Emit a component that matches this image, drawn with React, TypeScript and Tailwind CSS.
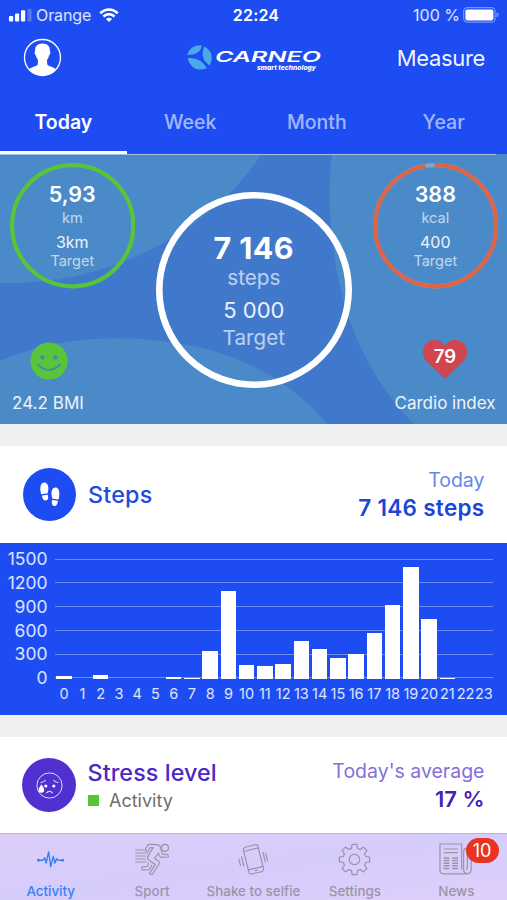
import * as React from 'react';
import clsx from 'clsx';

const PERIODS = ['Today', 'Week', 'Month', 'Year'];

const HOURLY_STEPS = [
    30, 0, 38, 0, 0, 0, 22, 12, 343, 1093, 165, 155, 185, 469, 365, 260, 310, 574, 913, 1396, 750, 12, 0, 0,
];
const Y_TICKS = [1500, 1200, 900, 600, 300, 0];
const MAX_STEPS = 1500;

const StatusBar = () => (
    <div className="flex h-[30px] items-center px-[9px] text-[16px] leading-[30px] text-white/85">
        <div className="flex flex-1 items-center">
            <svg width="23" height="13" viewBox="0 0 23 13" className="shrink-0 fill-white">
                <rect x="0" y="7" width="4.2" height="5.5" rx="1" />
                <rect x="6" y="4.6" width="4.2" height="7.9" rx="1" />
                <rect x="12" y="1.2" width="4.2" height="11.3" rx="1" />
                <rect x="18.6" y="0" width="4" height="12.5" rx="1" opacity="0.25" />
            </svg>
            <span className="ml-[4px] tracking-[-0.1px]">Orange</span>
            <svg width="20" height="15" viewBox="0 0 20 15" className="ml-[8px] fill-none stroke-white">
                <path d="M1.2 5.2 Q10 -2.2 18.8 5.2" strokeWidth="2.6" />
                <path d="M4.4 8.6 Q10 3.8 15.6 8.6" strokeWidth="2.6" />
                <path d="M10 14 L6.9 11 Q10 8.6 13.1 11 Z" className="fill-white stroke-none" />
            </svg>
        </div>
        <span className="pl-[5px] font-semibold tracking-[0.2px] text-white">22:24</span>
        <div className="flex flex-1 items-center justify-end">
            <span className="mr-[3px]">100 %</span>
            <svg width="36" height="16" viewBox="0 0 36 16" className="-mr-[1px]">
                <rect x="0.7" y="0.7" width="31.4" height="14.4" rx="3.6" className="fill-none stroke-white/40" strokeWidth="1.2" />
                <rect x="2.4" y="2.4" width="28" height="11" rx="1.8" className="fill-white" />
                <path d="M33.4 5.3 Q35.6 6 35.6 7.9 Q35.6 9.8 33.4 10.5 Z" className="fill-white/40" />
            </svg>
        </div>
    </div>
);

const Logo = () => (
    <svg width="140" height="32" viewBox="0 0 140 32">
        <g className="fill-[#4aa9e8]">
            <path d="M3.2 13 Q6 2.5 17.8 3.2 Q17.2 12.5 3.2 13 Z" />
            <path d="M20.4 4.6 Q31.5 11 25.8 23.6 Q15 16.6 20.4 4.6 Z" />
            <path d="M3.4 16.2 Q16.8 15 22.8 26.2 Q8.6 31.6 3.4 16.2 Z" />
        </g>
        <text
            x="31"
            y="20.2"
            textLength="106"
            lengthAdjust="spacingAndGlyphs"
            className="fill-white font-['Inter'] text-[14.5px] font-semibold italic"
        >
            CARNEO
        </text>
        <text
            x="73"
            y="27.6"
            textLength="59"
            lengthAdjust="spacingAndGlyphs"
            className="fill-white font-['Inter'] text-[6.5px] font-extrabold italic"
        >
            smart technology
        </text>
    </svg>
);

const NavBar = () => (
    <div className="flex h-[55px] items-center justify-between pr-[22px] pl-[23px]">
        <div className="flex w-[100px]">
            <svg width="39" height="39" viewBox="0 0 39 39">
                <circle cx="19.5" cy="19.5" r="18" className="fill-none stroke-white" strokeWidth="1.3" />
                <path
                    d="M19.5 5.4 C14 5.4 11.8 8.6 12.2 13 C11.2 13.4 11.8 17 13 17.6 C13.4 19.8 14.2 21 15 22 L14.8 26.2 C14 28.6 7.6 28.6 6 31.6 Q11.4 37.4 19.5 37.4 Q27.6 37.4 33 31.6 C31.4 28.6 25 28.6 24.2 26.2 L24 22 C24.8 21 25.6 19.8 26 17.6 C27.2 17 27.8 13.4 26.8 13 C27.2 8.6 25 5.4 19.5 5.4 Z"
                    className="fill-white"
                />
            </svg>
        </div>
        <Logo />
        <span className="w-[100px] text-right text-[22px] leading-none tracking-[-0.35px] text-white/95">Measure</span>
    </div>
);

const PeriodTabs = () => (
    <div className="flex h-[69px] pt-[2px]">
        {PERIODS.map((label, i) => (
            <div
                key={label}
                className={clsx(
                    'flex flex-1 justify-center border-b-[3px] pt-[21px] text-[19.5px] leading-[28px]',
                    i === 0 ? 'border-white font-semibold text-white' : 'border-transparent font-medium text-white/60'
                )}
            >
                {label}
            </div>
        ))}
    </div>
);

type RingProps = {
    size: number;
    stroke: number;
    className: string;
    gap?: boolean;
    children: React.ReactNode;
};

const Ring = ({ size, stroke, className, gap, children }: RingProps) => {
    const r = (size - stroke) / 2;
    return (
        <div className="relative shrink-0 text-center" style={{ width: size, height: size }}>
            <svg className="absolute inset-0 fill-none" width={size} height={size} viewBox={`0 0 ${size} ${size}`}>
                {gap && <circle cx={size / 2} cy={size / 2} r={r} strokeWidth={stroke} className="stroke-[#7fa6cf]" />}
                <circle
                    cx={size / 2}
                    cy={size / 2}
                    r={r}
                    strokeWidth={stroke}
                    pathLength={100}
                    strokeDasharray={gap ? '97.6 2.4' : undefined}
                    transform={`rotate(-91 ${size / 2} ${size / 2})`}
                    className={className}
                />
            </svg>
            <div className="relative flex h-full flex-col">{children}</div>
        </div>
    );
};

type SmallRingProps = { value: string; unit: string; target: string; className: string; gap?: boolean };

const SmallRing = ({ value, unit, target, className, gap }: SmallRingProps) => (
    <Ring size={125.4} stroke={4.2} className={className} gap={gap}>
        <span className="mt-[19px] text-[21.5px] leading-[25px] font-semibold text-white">{value}</span>
        <span className="text-[14.5px] leading-[21px] text-white/65">{unit}</span>
        <span className="mt-[4px] text-[16px] leading-[20px] text-white/90">{target}</span>
        <span className="text-[14.5px] leading-[18px] text-white/65">Target</span>
    </Ring>
);

const Overview = () => (
    <section className="relative h-[270px] overflow-hidden bg-[#4a8ac8]">
        <svg className="absolute inset-0" width="507" height="270" viewBox="0 0 507 270">
            <path
                d="M0 129 C60 130 110 118 165 88 C210 62 245 28 261 0 L332 0 C326 50 331 110 350 168 C366 210 388 245 414 270 L327 270 C300 236 255 208 210 196 C140 178 60 180 0 207 Z"
                className="fill-[#4078cc]"
            />
            <rect width="496" height="1" className="fill-[#a5c3e6]" />
        </svg>
        <div className="relative flex h-full justify-between pr-[9px] pl-[9.6px]">
            <div className="flex w-[125.4px] flex-col pt-[9.3px]">
                <SmallRing value="5,93" unit="km" target="3km" className="stroke-[#58c43a]" />
                <svg width="38" height="38" viewBox="0 0 38 38" className="mt-[53px] ml-[20.4px]">
                    <circle cx="19" cy="19" r="18.6" className="fill-[#58c43a]" />
                    <circle cx="12.4" cy="15.4" r="2.1" className="fill-[#4385b8]" />
                    <circle cx="25.2" cy="15.4" r="2.1" className="fill-[#4385b8]" />
                    <path d="M7.8 22.6 Q18.8 33.4 30 22.6" className="fill-none stroke-[#4385b8]" strokeWidth="1.6" strokeLinecap="round" />
                </svg>
                <span className="mt-[13px] ml-[2.4px] text-[17px] leading-[20px] tracking-[0.05px] whitespace-nowrap text-white/90">
                    24.2 BMI
                </span>
            </div>
            <div className="-mx-[10px] pt-[37.5px]">
                <Ring size={196} stroke={6.6} className="stroke-white">
                    <span className="mt-[38px] text-[30.5px] leading-[35px] font-bold tracking-[0.4px] text-white">7 146</span>
                    <span className="text-[20.7px] leading-[26px] text-white/65">steps</span>
                    <span className="mt-[6px] text-[22px] leading-[27px] text-white/90">5 000</span>
                    <span className="text-[20.7px] leading-[27px] text-white/65">Target</span>
                </Ring>
            </div>
            <div className="flex w-[125.4px] flex-col items-end pt-[9.3px]">
                <SmallRing value="388" unit="kcal" target="400" className="stroke-[#dd6546]" gap />
                <div className="relative mt-[50px] mr-[30px] h-[41px] w-[46px]">
                    <svg className="absolute inset-0" width="46" height="41" viewBox="0 0 46 41">
                        <path
                            d="M23 39.8 L4.6 22.2 C-0.8 16.4 0 7.4 5.6 3.2 C11.4 -0.8 19.4 0.8 23 7 C26.6 0.8 34.6 -0.8 40.4 3.2 C46 7.4 46.8 16.4 41.4 22.2 Z"
                            className="fill-[#cf4651]"
                        />
                    </svg>
                    <span className="relative block text-center text-[18.5px] leading-[35px] font-semibold text-white">79</span>
                </div>
                <span className="mt-[13px] mr-[2.5px] text-[17px] leading-[20px] whitespace-nowrap text-white/90">
                    Cardio index
                </span>
            </div>
        </div>
    </section>
);

const StepsCard = () => (
    <section>
        <div className="flex h-[97px] items-center bg-white pr-[22.5px] pl-[23px]">
            <div className="flex size-[53px] items-center justify-center rounded-full bg-[#1d4df2]">
                <svg width="20" height="25" viewBox="0 0 20 25" className="fill-white">
                    <path d="M1.1 12.2 C-0.6 5.4 0.4 0.6 4.2 0.4 C8.2 0.4 9.4 6 7.4 11.6 Z" />
                    <path d="M2 13.6 L7.7 12.8 C8.6 15.6 8.3 18.4 5.7 18.6 C3.3 18.6 2.2 16.6 2 13.6 Z" />
                    <path d="M12.4 16.8 C10.6 11.4 11.4 5.8 15.4 5.6 C19.2 5.6 20.2 10.8 18.6 17.4 Z" />
                    <path d="M12.2 18 L17.9 18.7 C17.7 21.8 16.5 24.2 14.3 24 C11.8 23.8 11.4 20.8 12.2 18 Z" />
                </svg>
            </div>
            <h2 className="ml-[12px] flex-1 text-[23.3px] leading-[28px] font-medium tracking-[0.2px] text-[#1f4bdc]">Steps</h2>
            <div className="flex flex-col items-end pb-[2px]">
                <span className="text-[19.5px] leading-[28px] text-[#6488ea]">Today</span>
                <span className="text-[22.5px] leading-[28px] font-semibold tracking-[0.3px] text-[#1c45da]">7 146 steps</span>
            </div>
        </div>
        <div className="flex h-[172px] bg-[#1d4df2] pr-[14px] text-white/85">
            <div className="flex w-[55px] flex-col pt-[4px] pr-[7.5px] text-right text-[17.5px] leading-[23.85px]">
                {Y_TICKS.map((tick) => (
                    <span key={tick}>{tick}</span>
                ))}
            </div>
            <div className="flex-1 pt-[15.5px]">
                <div className="relative h-[120px]">
                    <div className="absolute inset-0 flex flex-col justify-between">
                        {Y_TICKS.map((tick) => (
                            <div key={tick} className="h-[1px] bg-[#6a8cf8]" />
                        ))}
                    </div>
                    <div className="relative flex h-full items-end">
                        {HOURLY_STEPS.map((steps, hour) => (
                            <div key={hour} className="flex h-full flex-1 items-end justify-center">
                                <div className="w-[15.6px] bg-white" style={{ height: `${(steps / MAX_STEPS) * 100}%` }} />
                            </div>
                        ))}
                    </div>
                </div>
                <div className="mt-[5px] flex text-[14.5px] leading-[20px]">
                    {HOURLY_STEPS.map((_, hour) => (
                        <span key={hour} className="flex w-0 flex-1 justify-center">
                            {hour}
                        </span>
                    ))}
                </div>
            </div>
        </div>
    </section>
);

const StressCard = () => (
    <section className="flex h-[96px] items-center bg-white pr-[22.5px] pl-[22px]">
        <div className="flex size-[54px] items-center justify-center rounded-full bg-[#5130d0]">
            <svg width="27" height="27" viewBox="0 0 27 27" className="fill-none stroke-white/80" strokeWidth="1">
                <circle cx="13.5" cy="13.5" r="12.6" />
                <path d="M4.6 10.6 Q8 10.4 9.6 8 M17.4 8 Q19 10.4 22.4 10.6" strokeWidth="1.2" />
                <path d="M10.4 21 Q13.5 17.8 16.6 21" strokeWidth="1.4" />
                <circle cx="9.8" cy="14" r="1.6" className="fill-white stroke-none" />
                <circle cx="17.8" cy="14" r="1.6" className="fill-white stroke-none" />
                <path d="M5.4 12.2 Q8.2 16 8.2 18 A2.8 2.8 0 0 1 2.6 18 Q2.6 16 5.4 12.2 Z" className="fill-white stroke-none" />
            </svg>
        </div>
        <div className="ml-[11.5px] flex flex-1 flex-col pt-[3px]">
            <h2 className="text-[23.3px] leading-[28px] font-medium tracking-[0.1px] whitespace-nowrap text-[#4c29c4]">
                Stress level
            </h2>
            <div className="flex items-center">
                <span className="size-[11px] bg-[#58c43a]" />
                <span className="ml-[10.5px] text-[18px] leading-[28px] text-[#6d6d6d]">Activity</span>
            </div>
        </div>
        <div className="flex flex-col items-end">
            <span className="text-[19.5px] leading-[28px] text-[#8470d8]">Today's average</span>
            <span className="text-[22px] leading-[28px] font-semibold text-[#4423bd]">17 %</span>
        </div>
    </section>
);

const ActivityIcon = () => (
    <svg width="27" height="17" viewBox="0 0 27 17" className="fill-none stroke-current" strokeWidth="1.4" strokeLinejoin="round">
        <path d="M1.5 9.2 H6 L7.6 6.8 L9.2 12 L11.6 1 L13.8 15.6 L16.2 5.4 L18 12 L19.6 7.6 L21 9.2 H25.5" />
        <circle cx="1.4" cy="9.2" r="0.8" className="fill-current" />
        <circle cx="25.6" cy="9.2" r="0.8" className="fill-current" />
    </svg>
);

const SportIcon = () => (
    <svg
        width="35"
        height="33"
        viewBox="0 0 35 33"
        className="fill-none stroke-current"
        strokeWidth="1.2"
        strokeLinejoin="round"
        strokeLinecap="round"
    >
        <circle cx="30" cy="4.8" r="3.5" />
        <path d="M10.2 6.6 L12.6 2.2 Q13.2 1.2 14.6 1.3 L22.4 1.7 Q25 2.2 25.6 4.6 L27.4 11.2 L32.2 11.7 Q34 12.4 33.2 14 L26.6 14.4 Q24.8 14 24.2 12.2 L23.6 10 L19.6 15.2 L23.6 18.2 Q24.8 19.4 24 21 L17.8 30.8 Q16 32.4 14.4 30.4 L20.2 21.6 L13.8 17 Q11.8 15 13.2 12.6 L18.2 4.6 L15.2 4.6 L13 8.4 Q11.2 9 10.2 6.6 Z" />
        <path d="M13.6 20.2 L12.4 23.4 L7.4 23.8 Q5.8 25.4 7.4 26.8 L14 26.6 L16.8 22.4" />
        <path d="M0.8 7 H9 M0.8 10 H12.4 M0.8 13 H10.4 M0.8 16 H10.4 M0.8 19 H11.4" />
    </svg>
);

const ShakeIcon = () => (
    <svg width="31" height="31" viewBox="0 0 31 31" className="fill-none stroke-current" strokeWidth="1.2" strokeLinecap="round">
        <g transform="rotate(-14 15.5 15.5)">
            <rect x="8" y="1.6" width="15" height="27.6" rx="2.4" />
            <path d="M8 5.4 H23 M8 24.4 H23 M14.4 26.8 H16.6" />
        </g>
        <path d="M3.6 12.8 L5.8 22 M1 15.4 L2.5 21.6 M25 8.4 L27.4 18 M27.7 9.4 L29.6 16.6" />
    </svg>
);

const SettingsIcon = () => (
    <svg width="33" height="33" viewBox="0 0 33 33" className="fill-none stroke-current" strokeWidth="1.2" strokeLinejoin="round">
        <circle cx="16.5" cy="16.5" r="5.2" />
        <path d="M14.1 1.4 H18.9 L19.5 5.4 Q20.9 5.8 22.2 6.5 L25.5 4.1 L28.9 7.5 L26.5 10.8 Q27.2 12.1 27.6 13.5 L31.6 14.1 V18.9 L27.6 19.5 Q27.2 20.9 26.5 22.2 L28.9 25.5 L25.5 28.9 L22.2 26.5 Q20.9 27.2 19.5 27.6 L18.9 31.6 H14.1 L13.5 27.6 Q12.1 27.2 10.8 26.5 L7.5 28.9 L4.1 25.5 L6.5 22.2 Q5.8 20.9 5.4 19.5 L1.4 18.9 V14.1 L5.4 13.5 Q5.8 12.1 6.5 10.8 L4.1 7.5 L7.5 4.1 L10.8 6.5 Q12.1 5.8 13.5 5.4 Z" />
    </svg>
);

const NewsIcon = () => (
    <svg width="33" height="32" viewBox="0 0 33 32" className="mr-[2px] fill-none stroke-current" strokeWidth="1.2">
        <path d="M22.6 26.6 V1 H1 V27.6 Q1 30.8 4.2 30.8 H28.4 Q32.2 30.4 32.2 26 V9 Q31.6 5.4 28.2 5.4 Q24.6 5.4 24.6 9 V27 Q25.2 30.4 27.8 30.6" />
        <path d="M28.4 9 V24.6 Q28.4 26.4 27 26.4" />
        <path d="M4.6 6 H19 M4.6 9.6 H19" />
        <path d="M4.6 15 H10.4 M4.6 17.6 H10.4 M4.6 20.2 H10.4 M4.6 22.8 H10.4 M4.6 25.4 H10.4" strokeWidth="1.5" />
        <path d="M13.2 15 H19 M13.2 17.6 H19 M13.2 20.2 H19 M13.2 22.8 H19 M13.2 25.4 H19" strokeWidth="1.5" />
    </svg>
);

const TABS = [
    { label: 'Activity', Icon: ActivityIcon },
    { label: 'Sport', Icon: SportIcon },
    { label: 'Shake to selfie', Icon: ShakeIcon },
    { label: 'Settings', Icon: SettingsIcon },
    { label: 'News', Icon: NewsIcon, badge: 10 },
];

const TabBar = () => (
    <nav className="flex h-[67px] border-t border-[#bdb6d0] bg-linear-to-br from-[#dccdf8] via-[#d6ccfc] to-[#dfcffa]">
        {TABS.map(({ label, Icon, badge }, i) => (
            <div
                key={label}
                className={clsx(
                    'relative flex w-0 flex-1 flex-col items-center pt-[8px]',
                    i === 0 ? 'text-[#3680f6]' : 'text-[#9b94a6]'
                )}
            >
                <div className="flex h-[34px] items-center">
                    <Icon />
                </div>
                <span className="mt-[5.5px] text-[13.4px] leading-[18px] font-medium whitespace-nowrap">{label}</span>
                {badge && (
                    <span className="absolute top-[3.5px] left-[60px] h-[25px] w-[33px] rounded-full bg-[#e93323] text-center text-[18px] leading-[25px] text-white">
                        {badge}
                    </span>
                )}
            </div>
        ))}
    </nav>
);

const App = () => (
    <div className="flex h-[900px] w-[507px] flex-col overflow-hidden bg-[#eeefef] font-['Inter',sans-serif]">
        <header className="bg-[#1d4df2]">
            <StatusBar />
            <NavBar />
            <PeriodTabs />
        </header>
        <Overview />
        <div className="flex flex-col gap-[22px] pt-[22px]">
            <StepsCard />
            <StressCard />
        </div>
        <TabBar />
    </div>
);

export default App;
